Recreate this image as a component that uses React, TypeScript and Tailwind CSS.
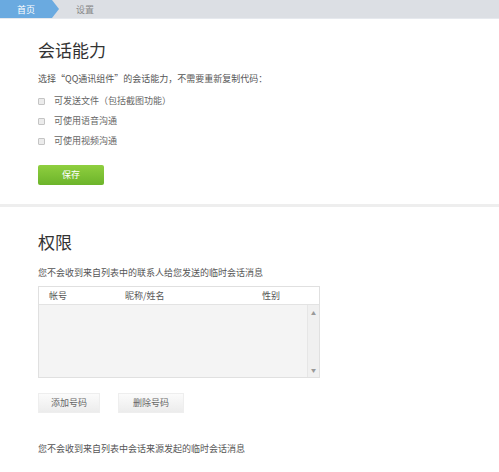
import React from "react";

const font = { fontFamily: '"Noto Sans CJK SC", "Liberation Sans", sans-serif' };

function Checkbox({ label }: { label: string }) {
    return (
        <div className="flex items-center h-[20px]">
            <span className="w-[7px] h-[7px] border border-[#c4c4c4] bg-[#ececec] rounded-[1px]" />
            <span className="ml-[9px] text-[9px] text-[#666]">{label}</span>
        </div>
    );
}

export default function App() {
    return (
        <div className="w-[499px] h-[472px] bg-white overflow-hidden" style={font}>
            {/* Breadcrumb bar */}
            <div className="h-[19px] bg-[#dcdfe4] flex items-center relative border-b border-[#e6e9ee]">
                <div className="relative h-full w-[52px] bg-[#6aaae0] flex items-center justify-center">
                    <span className="text-[9px] text-white leading-none">首页</span>
                    <span className="absolute right-[-7px] top-0 w-0 h-0 border-t-[9.5px] border-b-[9.5px] border-l-[7px] border-t-transparent border-b-transparent border-l-[#6aaae0]" />
                </div>
                <span className="ml-[24px] text-[9px] text-[#888] leading-none">设置</span>
            </div>

            {/* Session ability */}
            <div className="pl-[38px] pt-[20px] h-[185px]">
                <h2 className="text-[17px] text-[#333] leading-[22px]">会话能力</h2>
                <p className="mt-[12px] text-[9px] text-[#555] leading-[12px]">选择“QQ通讯组件”的会话能力，不需要重新复制代码：</p>
                <div className="mt-[6px] flex flex-col">
                    <Checkbox label="可发送文件（包括截图功能）" />
                    <Checkbox label="可使用语音沟通" />
                    <Checkbox label="可使用视频沟通" />
                </div>
                <button className="mt-[14px] w-[66px] h-[20px] rounded-[2px] bg-gradient-to-b from-[#8fcf3f] to-[#6cb42a] text-white text-[9px] flex items-center justify-center">
                    保存
                </button>
            </div>

            {/* Divider */}
            <div className="h-[3px] bg-[#eeeeee]" />

            {/* Permissions */}
            <div className="pl-[38px] pt-[24px]">
                <h2 className="text-[17px] text-[#333] leading-[22px]">权限</h2>
                <p className="mt-[14px] text-[9px] text-[#555] leading-[12px]">您不会收到来自列表中的联系人给您发送的临时会话消息</p>

                <div className="mt-[7px] w-[282px] h-[92px] border border-[#e0e0e0] flex flex-col">
                    <div className="h-[18px] bg-white border-b border-[#e3e3e3] flex items-center text-[9px] text-[#555]">
                        <span className="ml-[10px] w-[76px]">帐号</span>
                        <span className="w-[137px]">昵称/姓名</span>
                        <span>性别</span>
                    </div>
                    <div className="flex-1 flex bg-[#f4f4f4]">
                        <div className="flex-1" />
                        <div className="w-[12px] border-l border-[#e6e6e6] bg-[#f0f0f0] flex flex-col items-center justify-between py-[5px] text-[#999] text-[5px] leading-none">
                            <span>▲</span>
                            <span>▼</span>
                        </div>
                    </div>
                </div>

                <div className="mt-[15px] flex gap-[18px]">
                    <button className="w-[62px] h-[20px] bg-gradient-to-b from-[#fbfbfb] to-[#ececec] border border-[#eeeeee] text-[9px] text-[#666] flex items-center justify-center">
                        添加号码
                    </button>
                    <button className="w-[66px] h-[20px] bg-gradient-to-b from-[#fbfbfb] to-[#ececec] border border-[#eeeeee] text-[9px] text-[#666] flex items-center justify-center">
                        删除号码
                    </button>
                </div>

                <p className="mt-[30px] text-[9px] text-[#555] leading-[12px]">您不会收到来自列表中会话来源发起的临时会话消息</p>
            </div>
        </div>
    );
}
